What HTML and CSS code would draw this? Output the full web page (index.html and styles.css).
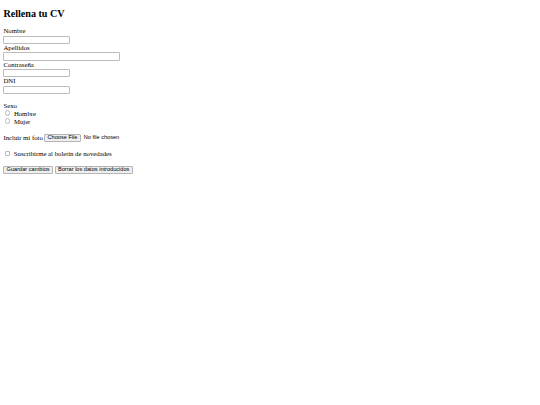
FILE: index.html
```html
<!DOCTYPE html>
<html lang="es">
<head>
<meta charset="utf-8">
<title>Rellena tu CV</title>
<link rel="stylesheet" href="styles.css">
</head>
<body>
<h1 class="title">Rellena tu CV</h1>
<form class="cv-form">
  <div class="field-group">
    <label class="field-label" for="nombre">Nombre</label>
    <input type="text" id="nombre" class="text-input">
  </div>
  <div class="field-group">
    <label class="field-label" for="apellidos">Apellidos</label>
    <input type="text" id="apellidos" class="text-input text-input-wide">
  </div>
  <div class="field-group">
    <label class="field-label" for="pass">Contraseña</label>
    <input type="password" id="pass" class="text-input">
  </div>
  <div class="field-group">
    <label class="field-label" for="dni">DNI</label>
    <input type="text" id="dni" class="text-input">
  </div>
  <div class="choice-group">
    <div class="choice-title">Sexo</div>
    <div class="choice-row"><input type="radio" name="sexo" id="hombre" class="radio"><label for="hombre">Hombre</label></div>
    <div class="choice-row"><input type="radio" name="sexo" id="mujer" class="radio"><label for="mujer">Mujer</label></div>
  </div>
  <div class="file-row">
    <label for="foto">Incluir mi foto</label>
    <input type="file" id="foto" class="file-input">
  </div>
  <div class="check-row"><input type="checkbox" id="boletin" class="checkbox"><label for="boletin">Suscribirme al boletín de novedades</label></div>
  <div class="actions">
    <button type="submit" class="btn">Guardar cambios</button>
    <button type="reset" class="btn">Borrar los datos introducidos</button>
  </div>
</form>
</body>
</html>
```
FILE: styles.css
```css
html {
  background: #fff;
}
body {
  margin: 0;
  padding: 3.4px;
  font-family: "Liberation Serif", "Times New Roman", serif;
  font-size: 6.75px;
  line-height: 8px;
  color: #000;
  background: #fff;
}
.title {
  font-size: 10.125px;
  line-height: 12px;
  font-weight: bold;
  margin: 4.2px 0 7.8px;
}
.cv-form {
  margin: 0;
}
.field-label {
  display: block;
  line-height: 8.4px;
}
.text-input {
  display: block;
  box-sizing: border-box;
  width: 67px;
  height: 8.25px;
  margin: 0;
  padding: 0 1px;
  border: 1px solid #bcbcbc;
  border-radius: 1px;
  background: #fff;
  font-family: "Liberation Sans", Arial, sans-serif;
  font-size: 5.625px;
}
.text-input-wide {
  width: 117px;
}
.choice-group {
  margin-top: 7.7px;
}
.choice-title,
.choice-row {
  line-height: 8px;
}
.radio,
.checkbox {
  -webkit-appearance: none;
  appearance: none;
  display: inline-block;
  box-sizing: border-box;
  width: 5.5px;
  height: 5.5px;
  margin: 0 3.4px 0 1.6px;
  border: 0.8px solid #b8b8b8;
  border-radius: 50%;
  background: #fff;
  vertical-align: baseline;
}
.checkbox {
  width: 5px;
  height: 5px;
  border-radius: 1px;
  margin-right: 3.8px;
}
.file-row {
  display: flex;
  align-items: center;
  gap: 1.6px;
  height: 8px;
  margin-top: 8px;
}
.file-input {
  font-family: "Liberation Sans", Arial, sans-serif;
  font-size: 5.625px;
  line-height: 1;
  margin: 0;
  padding: 0;
}
.file-input::file-selector-button {
  box-sizing: border-box;
  height: 7.8px;
  margin: 0 3px 0 0;
  padding: 0 2.2px;
  border: 1px solid #b4b4b4;
  border-radius: 1px;
  background: #efefef;
  color: #000;
  font: inherit;
}
.check-row {
  margin-top: 8.3px;
  line-height: 8px;
}
.actions {
  display: flex;
  gap: 2px;
  margin-top: 8px;
}
.btn {
  box-sizing: border-box;
  height: 8px;
  margin: 0;
  padding: 0 2.2px;
  border: 1px solid #b4b4b4;
  border-radius: 1px;
  background: #efefef;
  color: #000;
  font-family: "Liberation Sans", Arial, sans-serif;
  font-size: 5.625px;
  line-height: 1;
}
```
